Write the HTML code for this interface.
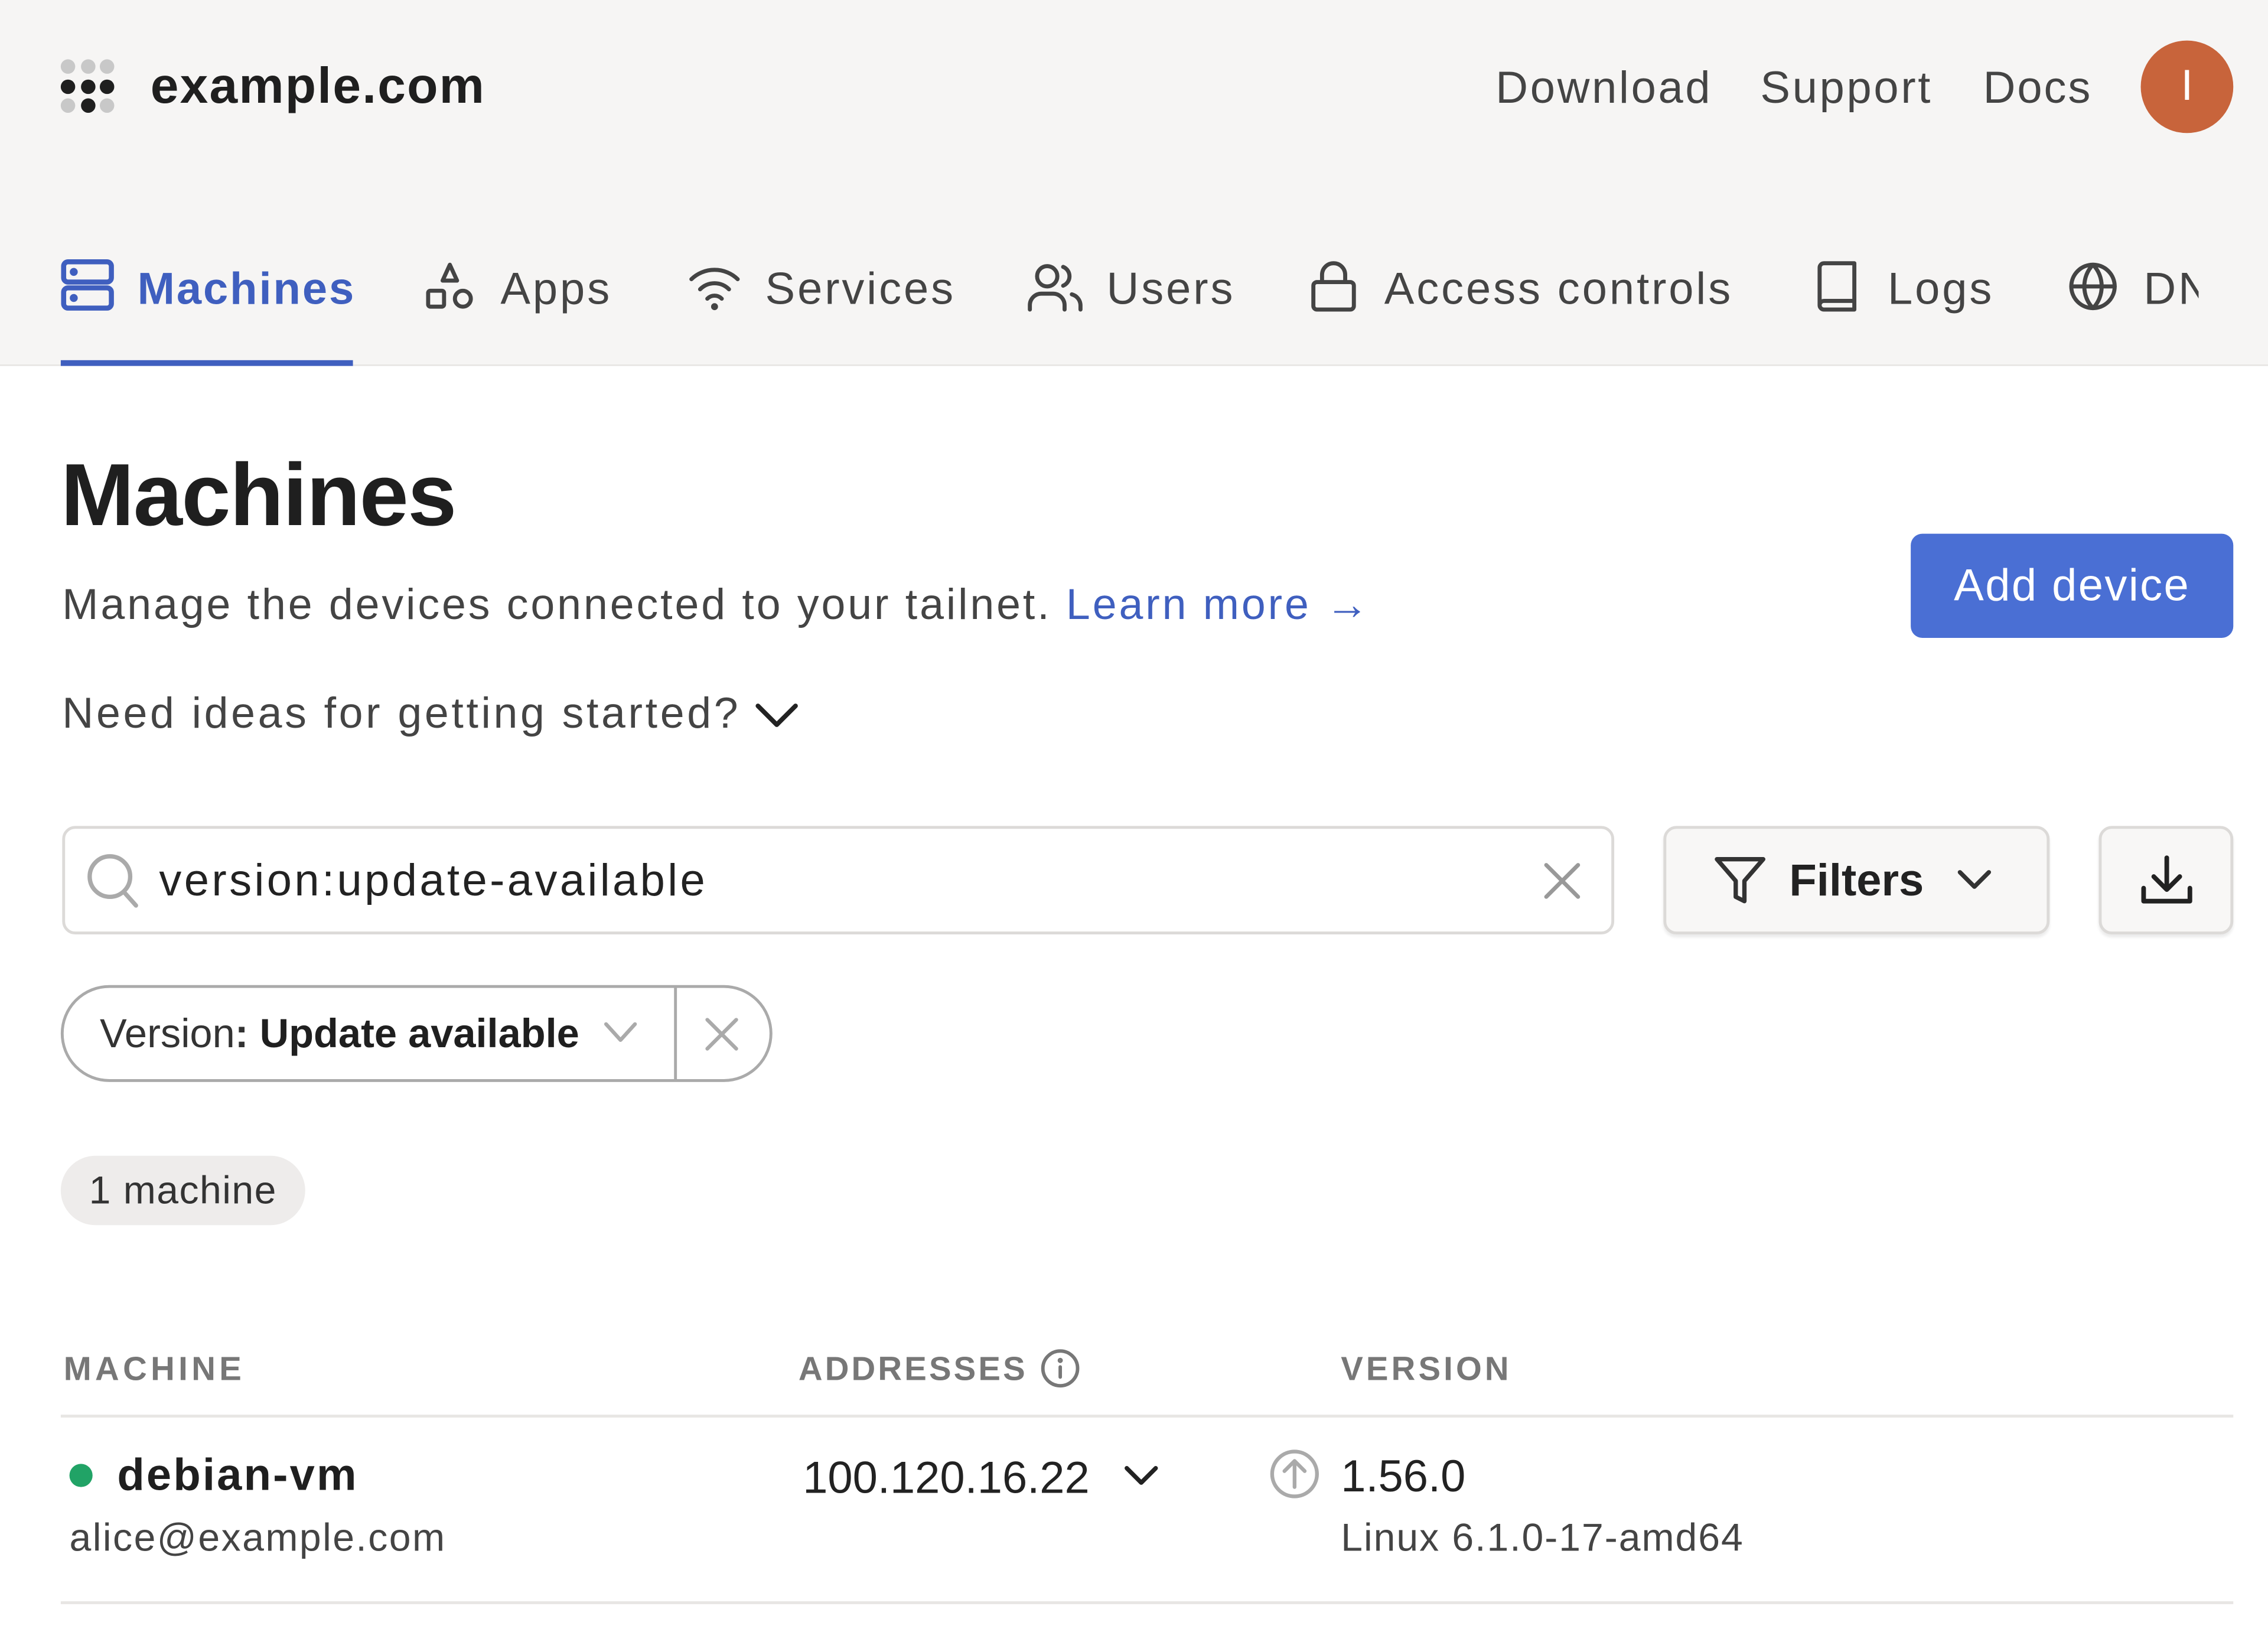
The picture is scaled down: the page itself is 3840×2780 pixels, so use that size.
<!DOCTYPE html>
<html><head><meta charset="utf-8"><style>
*{margin:0;padding:0;box-sizing:border-box}
html,body{width:3840px;height:2780px;overflow:hidden;background:#fff}
#r{position:absolute;left:0;top:0;width:1568px;height:1135px;transform:scale(2.449);transform-origin:0 0;font-family:"Liberation Sans",sans-serif;color:#222}
.a{position:absolute;white-space:nowrap}
.t{letter-spacing:1.6px}
svg{position:absolute;fill:none;stroke-linecap:round;stroke-linejoin:round}
</style></head><body><div id="r">
<div class="a" style="left:0;top:0;width:1568px;height:253px;background:#f6f5f4;border-bottom:1px solid #e6e4e2"></div>
<svg style="left:40px;top:40px" width="44" height="40" viewBox="0 0 44 40">
<g fill="#c8c8c8" stroke="none"><circle cx="7" cy="6" r="5"/><circle cx="21" cy="6" r="5"/><circle cx="34" cy="6" r="5"/><circle cx="7" cy="33" r="5"/><circle cx="34" cy="33" r="5"/></g>
<g fill="#1f1f1f" stroke="none"><circle cx="7" cy="20" r="5"/><circle cx="21" cy="20" r="5"/><circle cx="34" cy="20" r="5"/><circle cx="21" cy="33" r="5"/></g></svg>
<div class="a" style="left:104px;top:40px;font-size:35px;font-weight:bold;color:#1f1f1f;letter-spacing:0.9px">example.com</div>
<div class="a t" style="left:1034px;top:43px;font-size:31px;color:#444;letter-spacing:1.5px">Download</div>
<div class="a t" style="left:1217px;top:43px;font-size:31px;color:#444;letter-spacing:1.5px">Support</div>
<div class="a t" style="left:1371px;top:43px;font-size:31px;color:#444;letter-spacing:1.2px">Docs</div>
<div class="a" style="left:1480px;top:28px;width:64px;height:64px;border-radius:50%;background:#c8643b;color:#fff;font-size:30px;text-align:center;line-height:64px">I</div>
<svg style="left:42px;top:179px" width="38" height="38" viewBox="0 0 38 38" stroke="#3f5fbf" stroke-width="3.5"><rect x="2" y="2" width="33" height="14" rx="3"/><rect x="2" y="20" width="33" height="14" rx="3"/><circle cx="9" cy="9" r="1" fill="#3f5fbf"/><circle cx="9" cy="27" r="1" fill="#3f5fbf"/></svg>
<div class="a" style="left:95px;top:182px;font-size:31px;color:#3f5fbf;font-weight:bold;letter-spacing:1.2px">Machines</div>
<div class="a" style="left:42px;top:249px;width:202px;height:4px;background:#3f5fbf"></div>
<svg style="left:293px;top:180px" width="36" height="36" viewBox="0 0 36 36" stroke="#444" stroke-width="2.8"><path d="M18 3 L23 14 H13 Z"/><rect x="3" y="21" width="11" height="11" rx="1.5"/><circle cx="27" cy="26.5" r="5.5"/></svg>
<div class="a t" style="left:346px;top:182px;font-size:31px;color:#444">Apps</div>
<svg style="left:475px;top:182px" width="38" height="34" viewBox="0 0 38 34" stroke="#444" stroke-width="2.8"><path d="M3 11 a23 23 0 0 1 32 0"/><path d="M9 18 a14 14 0 0 1 20 0"/><path d="M14 24.5 a7 7 0 0 1 10 0"/><circle cx="19" cy="30" r="1" fill="#444"/></svg>
<div class="a t" style="left:529px;top:182px;font-size:31px;color:#444">Services</div>
<svg style="left:710px;top:181px" width="40" height="36" viewBox="0 0 40 36" stroke="#444" stroke-width="2.8"><circle cx="14" cy="10" r="7"/><path d="M2 33 v-3 a8 8 0 0 1 8 -8 h8 a8 8 0 0 1 8 8 v3"/><path d="M25 3.5 a7 7 0 0 1 0 13"/><path d="M31 22.5 a8 8 0 0 1 6 7.5 v3"/></svg>
<div class="a t" style="left:765px;top:182px;font-size:31px;color:#444">Users</div>
<svg style="left:904px;top:179px" width="36" height="38" viewBox="0 0 36 38" stroke="#444" stroke-width="2.8"><rect x="4" y="16" width="28" height="19" rx="2.5"/><path d="M10 16 v-5 a8 8 0 0 1 16 0 v5"/></svg>
<div class="a t" style="left:957px;top:182px;font-size:31px;color:#444">Access controls</div>
<svg style="left:1253px;top:179px" width="34" height="38" viewBox="0 0 34 38" stroke="#444" stroke-width="2.8"><path d="M5 32 V6 a3 3 0 0 1 3 -3 H29 V35 H8 a3 3 0 0 1 -3 -3 a3 3 0 0 1 3 -3 H29"/></svg>
<div class="a t" style="left:1305px;top:182px;font-size:31px;color:#444">Logs</div>
<svg style="left:1429px;top:180px" width="36" height="36" viewBox="0 0 36 36" stroke="#444" stroke-width="2.8"><circle cx="18" cy="18" r="15"/><path d="M3 18 H33"/><path d="M18 3 c-8 8 -8 22 0 30 c8 -8 8 -22 0 -30"/></svg>
<div class="a t" style="left:1482px;top:182px;font-size:31px;color:#444;width:38px;overflow:hidden">DNS</div>
<div class="a" style="left:42px;top:307px;font-size:61px;font-weight:bold;color:#1f1f1f;letter-spacing:-0.6px">Machines</div>
<div class="a" style="left:43px;top:402px;font-size:30px;color:#444;letter-spacing:1.6px">Manage the devices connected to your tailnet. <span style="color:#3f5fbf">Learn more →</span></div>
<div class="a" style="left:1321px;top:369px;width:223px;height:72px;border-radius:8px;background:#4a6fd4;color:#fff;font-size:31px;text-align:center;line-height:72px;letter-spacing:1px">Add device</div>
<div class="a" style="left:43px;top:477px;font-size:30px;color:#444;letter-spacing:1.9px">Need ideas for getting started?</div>
<svg style="left:520px;top:480px" width="34" height="28" viewBox="0 0 34 28" stroke="#222" stroke-width="3.2"><path d="M4 8 L17 21 L30 8"/></svg>
<div class="a" style="left:43px;top:571px;width:1073px;height:75px;border:2px solid #dcdad8;border-radius:9px"></div>
<svg style="left:58px;top:588px" width="42" height="42" viewBox="0 0 42 42" stroke="#aaa" stroke-width="3"><circle cx="18" cy="18" r="14"/><path d="M28 29 L36 38"/></svg>
<div class="a" style="left:110px;top:591px;font-size:31px;color:#222;letter-spacing:1.8px">version:update-available</div>
<svg style="left:1064px;top:593px" width="32" height="32" viewBox="0 0 32 32" stroke="#999" stroke-width="2.8"><path d="M5 5 L27 27 M27 5 L5 27"/></svg>
<div class="a" style="left:1150px;top:571px;width:267px;height:75px;border:2px solid #dcdad8;border-radius:9px;background:#f8f7f6;box-shadow:0 2px 2px rgba(0,0,0,.08)"></div>
<svg style="left:1184px;top:590px" width="38" height="38" viewBox="0 0 38 38" stroke="#333" stroke-width="3"><path d="M3 4 H35 L22 19 V33 L16 30 V19 Z"/></svg>
<div class="a" style="left:1237px;top:591px;font-size:31px;color:#222;font-weight:bold">Filters</div>
<svg style="left:1350px;top:596px" width="30" height="24" viewBox="0 0 30 24" stroke="#333" stroke-width="3"><path d="M5 7 L15 17 L25 7"/></svg>
<div class="a" style="left:1451px;top:571px;width:93px;height:75px;border:2px solid #dcdad8;border-radius:9px;background:#f8f7f6;box-shadow:0 2px 2px rgba(0,0,0,.08)"></div>
<svg style="left:1478px;top:589px" width="40" height="40" viewBox="0 0 40 40" stroke="#222" stroke-width="3.2"><path d="M20 4 V26 M11 17 L20 26 L29 17 M4 25 V34 H36 V25"/></svg>
<div class="a" style="left:42px;top:681px;width:492px;height:67px;border:2px solid #aaa;border-radius:34px"></div>
<div class="a" style="left:466px;top:682px;width:2px;height:65px;background:#aaa"></div>
<div class="a" style="left:69px;top:699px;font-size:28px;color:#333">Version<b>:</b> <b style="color:#1f1f1f">Update available</b></div>
<svg style="left:415px;top:703px" width="28" height="22" viewBox="0 0 28 22" stroke="#aaa" stroke-width="2.6"><path d="M4 5 L14 16 L24 5"/></svg>
<svg style="left:485px;top:701px" width="28" height="28" viewBox="0 0 28 28" stroke="#aaa" stroke-width="2.6"><path d="M4 4 L24 24 M24 4 L4 24"/></svg>
<div class="a" style="left:42px;top:799px;width:169px;height:48px;border-radius:24px;background:#eeeceb;font-size:27px;color:#333;text-align:center;line-height:48px;letter-spacing:0.6px">1 machine</div>
<div class="a" style="left:44px;top:933px;font-size:23px;font-weight:bold;color:#777;letter-spacing:2.6px">MACHINE</div>
<div class="a" style="left:552px;top:933px;font-size:23px;font-weight:bold;color:#777;letter-spacing:1.7px">ADDRESSES</div>
<svg style="left:718px;top:931px" width="30" height="30" viewBox="0 0 30 30" stroke="#777" stroke-width="2.4"><circle cx="15" cy="15" r="12"/><path d="M15 14 V21"/><circle cx="15" cy="9.5" r=".6" fill="#777"/></svg>
<div class="a" style="left:927px;top:933px;font-size:23px;font-weight:bold;color:#777;letter-spacing:2.1px">VERSION</div>
<div class="a" style="left:42px;top:978px;width:1502px;height:2px;background:#e8e6e4"></div>
<div class="a" style="left:48px;top:1012px;width:16px;height:16px;border-radius:50%;background:#21a366"></div>
<div class="a" style="left:81px;top:1002px;font-size:31px;font-weight:bold;color:#1f1f1f;letter-spacing:1.3px">debian-vm</div>
<div class="a" style="left:48px;top:1048px;font-size:27px;color:#444;letter-spacing:1px">alice@example.com</div>
<div class="a" style="left:555px;top:1004px;font-size:31px;color:#222">100.120.16.22</div>
<svg style="left:775px;top:1009px" width="28" height="24" viewBox="0 0 28 24" stroke="#222" stroke-width="3"><path d="M4 6 L14 16 L24 6"/></svg>
<svg style="left:877px;top:1001px" width="36" height="36" viewBox="0 0 36 36" stroke="#aaa" stroke-width="2.6"><circle cx="18" cy="18" r="15.5"/><path d="M18 27 V10 M11 16 L18 9 L25 16"/></svg>
<div class="a" style="left:927px;top:1003px;font-size:31px;color:#222">1.56.0</div>
<div class="a" style="left:927px;top:1048px;font-size:27px;color:#444;letter-spacing:0.8px">Linux 6.1.0-17-amd64</div>
<svg style="left:1468px;top:1014px" width="44" height="16" viewBox="0 0 44 16" stroke="none" fill="#555"><circle cx="6" cy="8" r="4"/><circle cx="22" cy="8" r="4"/><circle cx="38" cy="8" r="4"/></svg>
<div class="a" style="left:42px;top:1107px;width:1502px;height:2px;background:#e8e6e4"></div>
</div></body></html>
